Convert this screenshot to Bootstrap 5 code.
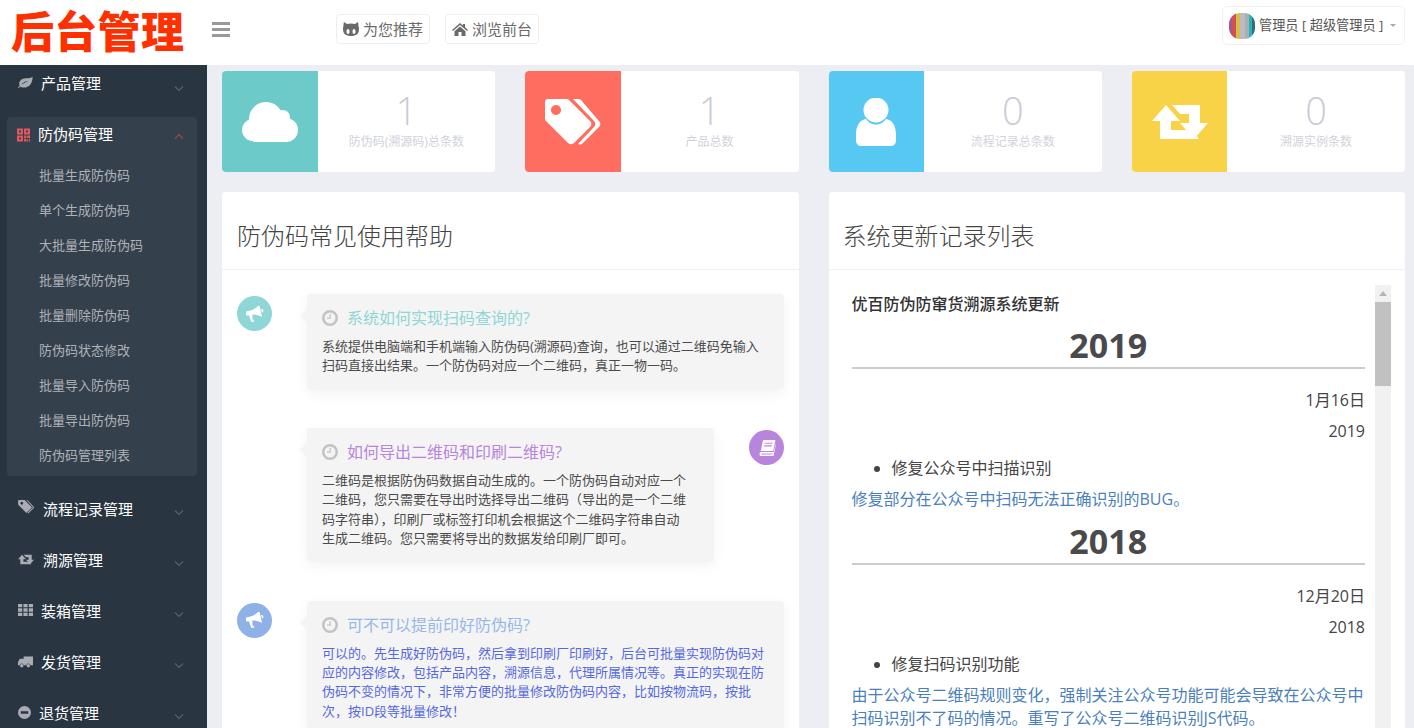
<!DOCTYPE html>
<html lang="zh-CN">
<head>
<meta charset="utf-8">
<title>后台管理</title>
<link href="https://cdn.jsdelivr.net/npm/bootstrap@5.3.0/dist/css/bootstrap.min.css" rel="stylesheet">
<style>
html,body{height:728px;overflow:hidden}
body{font-family:"Open Sans","Noto Sans CJK SC",sans-serif;background:#edeef4;color:#555}
.ico{fill:currentColor;display:block;flex:none}
.topbar{height:65px;background:#fff}
.logo-txt{width:207px;padding-left:11px;color:#ff3000;font-size:43px;font-weight:900;line-height:63px;letter-spacing:.3px;white-space:nowrap}
.burger{width:18px;margin:22px 0 0 5px}
.burger i{display:block;height:3px;background:#999;margin-bottom:3px}
.top-link{height:30px;border:1px solid #eee;border-radius:4px;padding:0 6px;font-size:15px;color:#6a6a6a;background:#fff;text-decoration:none;white-space:nowrap}
.top-links{margin:14px 0 0 106px;gap:15px}
.user-box{width:183px;height:39px;margin:6px 9px 0 0;border:1px solid #f1f1f1;border-radius:5px;padding:0 6px;font-size:13.2px;color:#555;white-space:nowrap}
.user-box.dropdown-toggle::after{color:#aaa;margin-left:7px;vertical-align:.15em}
.avatar-pic{border-radius:42%;flex:none}
.layout{height:663px}
.sidebar{width:207px;background:#2a3542;color:#fff;overflow:hidden;flex:none}
.nav-row{height:51px;padding-left:18px;font-size:15px;line-height:36px;position:relative}
.nav-row .ico{color:#a9adb3}
.nav-row .chev{position:absolute;right:23px;top:19px;color:#58626e}
.nav-first{height:52px}
.nav-first .chev{top:21px}
.nav-open{background:#35404d;border-radius:4px;margin:0 10px 15px 7px;height:359px}
.nav-open .nav-row{padding-left:10px;height:40.5px;line-height:35px}
.nav-open .nav-row .chev{right:13px;top:16px;color:#8a4a4c}
.nav-open .nav-row .ico-qr{color:#e5585c;margin-top:11px}
.sub-item{height:35px;line-height:35px;padding-left:32px;font-size:13px;color:#aeb2b7;white-space:nowrap}
.sub-list{margin:0;padding:0}
.mt-9px{margin-top:9px}.mt-11px{margin-top:11px}.mt-12px{margin-top:12px}.mr-1px{margin-right:1px}
.main-area{flex:1;min-width:0;padding:6px 9px 0 15px}
.stat-grid{display:grid;grid-template-columns:repeat(4,1fr);gap:30px}
.stat-card{height:101px;background:#fff;border-radius:4px;overflow:hidden}
.stat-ico{width:95.5px;color:#fff;flex:none}
.stat-num{font-size:38px;font-weight:300;line-height:44px;color:#c9ccd7;margin-top:17px}
.stat-lbl{font-size:12px;color:#d0d3da;line-height:14px;margin-top:3px}
.panel-grid{display:grid;grid-template-columns:repeat(2,1fr);gap:30px;margin-top:20px}
.panel-card{border:0;border-radius:4px;height:600px;overflow:hidden}
.panel-head{height:78px;background:#fff;border-bottom:1px solid #eff0f4;padding:28px 15px 0;font-size:24px;line-height:32px;font-weight:300;color:#444}
.panel-head-alt{padding-left:14px}
.tl-body{padding:24px 15px 0}
.tl-item{gap:35px;margin-bottom:38.5px}
.tl-dot{width:35px;height:35px;border-radius:50%;color:#fff;flex:none;margin-top:2px}
.tl-bubble{background:#f4f4f4;padding:14px 15px 14px;border-radius:4px;box-shadow:0 4px 14px rgba(0,0,0,.05);position:relative;flex:1;min-width:0}
.tl-bubble::before{content:"";position:absolute;top:15px;left:-7px;border:7px solid transparent;border-left:0;border-right-color:#f4f4f4}
.tl-narrow{flex:none;width:407px;margin-left:70px;padding-right:27px}
.tl-title{font-size:16px;line-height:20px;gap:9px;margin-bottom:9px;font-weight:400}
.tl-title .ico{color:#c3c3c3}
.tl-text{font-size:13px;line-height:19.3px;color:#4b4b4b;margin:0}
.c-teal{color:#8fd6d6}.c-purple{color:#b984dc}.c-blue{color:#97b8e9}
.bg-teal{background:#8fd6d6}.bg-purple{background:#b984dc}.bg-blue{background:#8eb1e6}
.text-indigo{color:#5468e0}
.log-wrap{padding:15px 14px 0 23px;gap:10px}
.log-body{flex:1;min-width:0;font-size:16px;color:#444;padding-top:8px}
.log-title{font-size:16px;font-weight:500;line-height:22px;color:#333;margin:0}
.log-year{font-size:34px;font-weight:700;line-height:46px;text-align:center;color:#4a4a4e;padding:7px 0 0;border-bottom:2px solid #ccc;height:54px;margin:0}
.log-date{text-align:right;line-height:31px;margin:0}
.log-first{padding-top:16px}
.log-list{margin:6px 0 0;padding-left:40px;line-height:31px}
.log-blue{color:#4a7fbd;line-height:23px;margin:4px 0 0}
.fake-bar{width:16px;flex:none;background:#f1f1f1;height:445px}
.fake-arrow{height:17px;padding-top:6px}
.fake-arrow i{display:block;width:0;height:0;margin:0 auto;border:4px solid transparent;border-top:0;border-bottom:5px solid #b5b5b5}
.fake-thumb{height:84px;background:#c1c1c1}
</style>
</head>
<body>
<svg width="0" height="0" class="position-absolute">
<defs>
<symbol id="i-cloud" viewBox="0 0 56 40"><circle cx="11" cy="28" r="11"/><circle cx="24" cy="17" r="17"/><circle cx="41" cy="15" r="7"/><circle cx="44" cy="28" r="12"/><rect x="11" y="22" width="33" height="18"/></symbol>
<symbol id="i-tags" viewBox="0 0 56 46"><path fill-rule="evenodd" d="M3 0H21a4 4 0 0 1 3 1L45 22a4 4 0 0 1 0 6L29 44a4 4 0 0 1-6 0L2 23a4 4 0 0 1-2-4V3a3 3 0 0 1 3-3ZM11 6a5 5 0 1 0 .01 0Z"/><path d="M28 0h5a4 4 0 0 1 3 1L54 22a4 4 0 0 1 0 6L38 44a4 4 0 0 1-5 1L49 28a4 4 0 0 0 0-6Z"/></symbol>
<symbol id="i-user" viewBox="0 0 40 48"><ellipse cx="20" cy="12" rx="12.5" ry="12.5"/><path d="M10 21c3 4 6 5.500 10 5.500s7-1.500 10-5.500c6 1 10 6 10 16v5c0 4-2 6-6 6H6c-4 0-6-2-6-6v-5c0-10 4-15 10-16Z"/></symbol>
<symbol id="i-retweet" viewBox="0 0 56 34"><path d="M14 0 28 16H19V25H40L47 34H8V16H0Z"/><path d="M20 0H48V18H56L42 34 28 18H37V9H28Z"/></symbol>
<symbol id="i-horn" viewBox="0 0 20 18"><g transform="rotate(-12 10 9)"><path d="M17 0v14c-3-3-7-4.500-10-5L6 14l2 3H4L3 9H2a2 2 0 0 1 0-5h5c3-.5 7-2 10-4Z"/><path d="M18 5a2 2 0 0 1 0 4Z"/></g></symbol>
<symbol id="i-book" viewBox="0 0 20 18"><path fill-rule="evenodd" d="M5.500 0H19.500L17 12.500H3ZM7.500 3 7.200 4.200H16L16.300 3ZM6.800 6 6.500 7.200H15.300L15.600 6Z"/><path d="M3 13.500H17.500L20 3.500 20 5 17.500 17.500A.6.6 0 0 1 17 18H3.500C1 18 1 14.500 3 13.500ZM4 15.200C3.300 15.200 3.300 16.300 4 16.300H16L16.200 15.200Z" fill-rule="evenodd"/></symbol>
<symbol id="i-clock" viewBox="0 0 16 16"><path fill-rule="evenodd" d="M8 0a8 8 0 1 1 0 16A8 8 0 0 1 8 0Zm0 2.500a5.500 5.500 0 1 0 0 11 5.500 5.500 0 0 0 0-11Z"/><path d="M8.800 4v4.800H5V7.500h2.500V4Z"/></symbol>
<symbol id="i-leaf" viewBox="0 0 18 14"><path fill-rule="evenodd" d="M17.500 0C17.500 8 13.500 13 7 13c-2 0-3.500-.5-4.500-1.200L.8 14 0 13l2-2.500C0 6 4 2 10 2c3 0 6-.5 7.500-2ZM12.500 5C9 5.300 6 7 3.500 9.800 6.500 8 9.500 6.500 12.500 5Z"/></symbol>
<symbol id="i-qr" viewBox="0 0 14 14"><path fill-rule="evenodd" d="M0 0h6.400v6.400H0ZM2.200 2.200v2h2v-2ZM7.600 0H14v6.400H7.600ZM9.800 2.200v2h2v-2ZM0 7.600h6.400V14H0ZM2.200 9.800v2h2v-2ZM7.600 7.600h2.600v2.600H7.600ZM11 7.600h3v2.600h-3ZM7.600 11h2.600v3H7.600ZM11 11.500h1.300V14H11ZM13 11h1v3h-1Z"/></symbol>
<symbol id="i-tag" viewBox="0 0 17 15"><path fill-rule="evenodd" d="M1 0H7L15 8 9 14 1 6Q0 5 0 4V1Q0 0 1 0ZM4 2a1.500 1.500 0 1 0 .01 0Z"/><path d="M9 0h1l7 7.500q.5.500 0 1L11 14.500 10 14l6-6Z"/></symbol>
<symbol id="i-th" viewBox="0 0 15 12"><path d="M0 0h4.200v3.300H0ZM5.400 0h4.200v3.300H5.400ZM10.800 0H15v3.300h-4.200ZM0 4.300h4.200v3.400H0ZM5.400 4.300h4.200v3.400H5.400ZM10.800 4.300H15v3.400h-4.200ZM0 8.700h4.200V12H0ZM5.400 8.700h4.200V12H5.400ZM10.800 8.700H15V12h-4.200Z"/></symbol>
<symbol id="i-truck" viewBox="0 0 16 12"><path d="M6 0h10v9.500H13a2 2 0 0 0-4 0H6a2 2 0 0 0-4 0H0V6l2-3.500h4Z"/><circle cx="4" cy="10" r="1.800"/><circle cx="11" cy="10" r="1.800"/></symbol>
<symbol id="i-minus" viewBox="0 0 14 14"><path fill-rule="evenodd" d="M7 0a7 7 0 1 1 0 14A7 7 0 0 1 7 0ZM3 5.700v2.600h8V5.700Z"/></symbol>
<symbol id="i-chev" viewBox="0 0 10 6"><path d="M1 .5 5 4.500 9 .5" fill="none" stroke="currentColor" stroke-width="1.200"/></symbol>
<symbol id="i-chevup" viewBox="0 0 10 6"><path d="M1 5.500 5 1.500 9 5.500" fill="none" stroke="currentColor" stroke-width="1.500"/></symbol>
<symbol id="i-cat" viewBox="0 0 16 14"><path fill-rule="evenodd" d="M1 0l3 2c2.500-.7 5.500-.7 8 0l3-2c.5 1.500.5 3 .5 4 .5 1 .5 2 .5 3 0 5-3 7-8 7s-8-2-8-7c0-1 0-2 .5-3C.5 3 .5 1.500 1 0ZM5 7C4 7 3.500 8 3.500 9.500S4 12 5 12 6.500 11 6.500 9.500 6 7 5 7ZM11 7c-1 0-1.500 1-1.500 2.500S10 12 11 12s1.500-1 1.500-2.500S12 7 11 7Z"/></symbol>
<symbol id="i-home" viewBox="0 0 16 13"><path d="M8 0l3 2.500V1h2v3.200L16 7l-1 1-7-6-7 6-1-1ZM8 3.500l5.500 4.700V13H9.500V9h-3v4H2.500V8.200Z"/></symbol>
</defs>
</svg>

<header class="topbar d-flex align-items-start">
  <div class="logo-txt">后台管理</div>
  <div class="burger"><i></i><i></i><i></i></div>
  <div class="top-links d-flex">
    <a class="top-link d-flex align-items-center gap-1" href="#"><svg class="ico" width="16" height="14"><use href="#i-cat"/></svg>为您推荐</a>
    <a class="top-link d-flex align-items-center gap-1" href="#"><svg class="ico" width="16" height="13"><use href="#i-home"/></svg>浏览前台</a>
  </div>
  <div class="user-box dropdown-toggle d-flex align-items-center ms-auto">
    <svg width="26" height="26" viewBox="0 0 26 26" class="me-1 avatar-pic"><path d="M0 0h3v26H0z" fill="#a8568f"/><path d="M3 0h4v26H3z" fill="#d2504f"/><path d="M7 0h4v26H7z" fill="#d8bd4b"/><path d="M11 0h5v26h-5z" fill="#bcbcc0"/><path d="M16 0h4v26h-4z" fill="#a9b0b5"/><path d="M20 0h3v26h-3z" fill="#2bb2b4"/><path d="M23 0h3v26h-3z" fill="#2d6f84"/></svg>
    <span>管理员 [ 超级管理员 ]</span>
  </div>
</header>

<div class="layout d-flex">
  <aside class="sidebar">
    <div class="nav-row nav-first d-flex gap-2 align-items-start"><svg class="ico mt-11px" width="15" height="13"><use href="#i-leaf"/></svg><span>产品管理</span><svg class="ico chev" width="10" height="6"><use href="#i-chev"/></svg></div>
    <div class="nav-open">
      <div class="nav-row d-flex gap-2 align-items-start"><svg class="ico ico-qr" width="13" height="14"><use href="#i-qr"/></svg><span>防伪码管理</span><svg class="ico chev" width="10" height="6"><use href="#i-chevup"/></svg></div>
      <div class="sub-list">
        <div class="sub-item">批量生成防伪码</div>
        <div class="sub-item">单个生成防伪码</div>
        <div class="sub-item">大批量生成防伪码</div>
        <div class="sub-item">批量修改防伪码</div>
        <div class="sub-item">批量删除防伪码</div>
        <div class="sub-item">防伪码状态修改</div>
        <div class="sub-item">批量导入防伪码</div>
        <div class="sub-item">批量导出防伪码</div>
        <div class="sub-item">防伪码管理列表</div>
      </div>
    </div>
    <div class="nav-row d-flex gap-2 align-items-start"><svg class="ico mt-9px mr-1px" width="16" height="14"><use href="#i-tag"/></svg><span>流程记录管理</span><svg class="ico chev" width="10" height="6"><use href="#i-chev"/></svg></div>
    <div class="nav-row d-flex gap-2 align-items-start"><svg class="ico mt-12px mr-1px" width="16" height="11"><use href="#i-retweet"/></svg><span>溯源管理</span><svg class="ico chev" width="10" height="6"><use href="#i-chev"/></svg></div>
    <div class="nav-row d-flex gap-2 align-items-start"><svg class="ico mt-11px" width="15" height="12"><use href="#i-th"/></svg><span>装箱管理</span><svg class="ico chev" width="10" height="6"><use href="#i-chev"/></svg></div>
    <div class="nav-row d-flex gap-2 align-items-start"><svg class="ico mt-12px" width="15" height="12"><use href="#i-truck"/></svg><span>发货管理</span><svg class="ico chev" width="10" height="6"><use href="#i-chev"/></svg></div>
    <div class="nav-row d-flex gap-2 align-items-start"><svg class="ico mt-11px" width="13" height="13"><use href="#i-minus"/></svg><span>退货管理</span><svg class="ico chev" width="10" height="6"><use href="#i-chev"/></svg></div>
  </aside>

  <main class="main-area">
    <div class="stat-grid">
      <div class="stat-card d-flex">
        <div class="stat-ico d-flex align-items-center justify-content-center" style="background:#6ccac9"><svg class="ico" width="56" height="40"><use href="#i-cloud"/></svg></div>
        <div class="flex-fill text-center"><div class="stat-num">1</div><div class="stat-lbl">防伪码(溯源码)总条数</div></div>
      </div>
      <div class="stat-card d-flex">
        <div class="stat-ico d-flex align-items-center justify-content-center" style="background:#ff6c60"><svg class="ico" width="56" height="46"><use href="#i-tags"/></svg></div>
        <div class="flex-fill text-center"><div class="stat-num">1</div><div class="stat-lbl">产品总数</div></div>
      </div>
      <div class="stat-card d-flex">
        <div class="stat-ico d-flex align-items-center justify-content-center" style="background:#57c8f2"><svg class="ico" width="40" height="48"><use href="#i-user"/></svg></div>
        <div class="flex-fill text-center"><div class="stat-num">0</div><div class="stat-lbl">流程记录总条数</div></div>
      </div>
      <div class="stat-card d-flex">
        <div class="stat-ico d-flex align-items-center justify-content-center" style="background:#f8d347"><svg class="ico" width="56" height="34"><use href="#i-retweet"/></svg></div>
        <div class="flex-fill text-center"><div class="stat-num">0</div><div class="stat-lbl">溯源实例条数</div></div>
      </div>
    </div>

    <div class="panel-grid">
      <section class="card panel-card">
        <div class="panel-head">防伪码常见使用帮助</div>
        <div class="tl-body">
          <div class="tl-item d-flex align-items-start">
            <div class="tl-dot bg-teal d-flex align-items-center justify-content-center"><svg class="ico" width="18" height="16"><use href="#i-horn"/></svg></div>
            <div class="tl-bubble">
              <div class="tl-title d-flex align-items-center c-teal"><svg class="ico" width="16" height="16"><use href="#i-clock"/></svg>系统如何实现扫码查询的?</div>
              <p class="tl-text">系统提供电脑端和手机端输入防伪码(溯源码)查询，也可以通过二维码免输入扫码直接出结果。一个防伪码对应一个二维码，真正一物一码。</p>
            </div>
          </div>
          <div class="tl-item d-flex align-items-start justify-content-between">
            <div class="tl-bubble tl-narrow">
              <div class="tl-title d-flex align-items-center c-purple"><svg class="ico" width="16" height="16"><use href="#i-clock"/></svg>如何导出二维码和印刷二维码?</div>
              <p class="tl-text">二维码是根据防伪码数据自动生成的。一个防伪码自动对应一个二维码，您只需要在导出时选择导出二维码（导出的是一个二维码字符串），印刷厂或标签打印机会根据这个二维码字符串自动生成二维码。您只需要将导出的数据发给印刷厂即可。</p>
            </div>
            <div class="tl-dot bg-purple d-flex align-items-center justify-content-center"><svg class="ico" width="18" height="16"><use href="#i-book"/></svg></div>
          </div>
          <div class="tl-item d-flex align-items-start">
            <div class="tl-dot bg-blue d-flex align-items-center justify-content-center"><svg class="ico" width="18" height="16"><use href="#i-horn"/></svg></div>
            <div class="tl-bubble">
              <div class="tl-title d-flex align-items-center c-blue"><svg class="ico" width="16" height="16"><use href="#i-clock"/></svg>可不可以提前印好防伪码?</div>
              <p class="tl-text text-indigo">可以的。先生成好防伪码，然后拿到印刷厂印刷好，后台可批量实现防伪码对应的内容修改，包括产品内容，溯源信息，代理所属情况等。真正的实现在防伪码不变的情况下，非常方便的批量修改防伪码内容，比如按物流码，按批次，按ID段等批量修改！</p>
            </div>
          </div>
        </div>
      </section>

      <section class="card panel-card">
        <div class="panel-head panel-head-alt">系统更新记录列表</div>
        <div class="log-wrap d-flex align-items-start">
          <div class="log-body">
            <p class="log-title">优百防伪防窜货溯源系统更新</p>
            <h2 class="log-year">2019</h2>
            <p class="log-date log-first">1月16日</p>
            <p class="log-date">2019</p>
            <ul class="log-list"><li>修复公众号中扫描识别</li></ul>
            <p class="log-blue">修复部分在公众号中扫码无法正确识别的BUG。</p>
            <h2 class="log-year">2018</h2>
            <p class="log-date log-first">12月20日</p>
            <p class="log-date">2018</p>
            <ul class="log-list"><li>修复扫码识别功能</li></ul>
            <p class="log-blue">由于公众号二维码规则变化，强制关注公众号功能可能会导致在公众号中扫码识别不了码的情况。重写了公众号二维码识别JS代码。</p>
          </div>
          <div class="fake-bar"><div class="fake-arrow"><i></i></div><div class="fake-thumb"></div></div>
        </div>
      </section>
    </div>
  </main>
</div>
<script src="https://cdn.jsdelivr.net/npm/bootstrap@5.3.0/dist/js/bootstrap.bundle.min.js"></script>
</body>
</html>
